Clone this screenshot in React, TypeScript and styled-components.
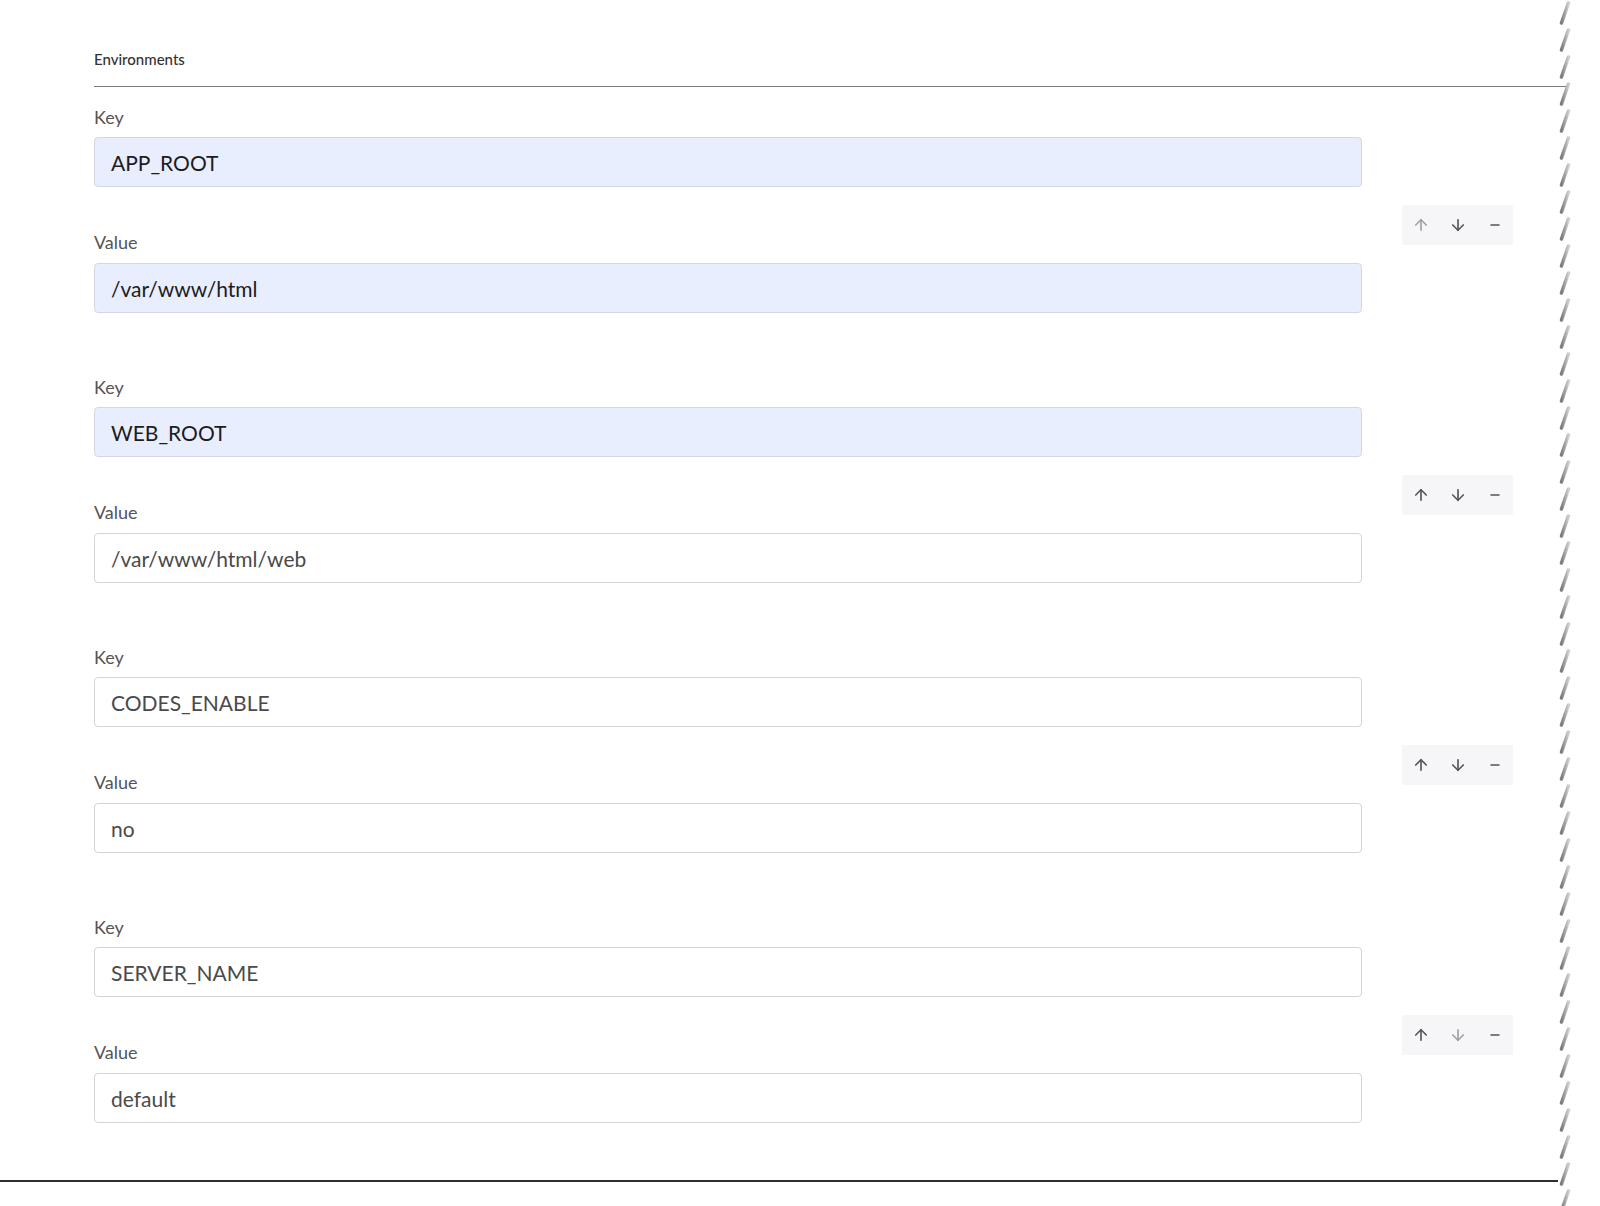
import React from 'react';
import styled, { createGlobalStyle } from 'styled-components';
import { ArrowUp, ArrowDown, Minus } from 'lucide-react';

const GlobalStyle = createGlobalStyle`
  html, body {
    margin: 0;
    padding: 0;
    background: #ffffff;
    font-family: Lato, "Open Sans", "Liberation Sans", sans-serif;
  }
`;

const Page = styled.div`
  display: flex;
  width: 1600px;
  height: 1206px;
  overflow: hidden;
  background: #ffffff;
`;

const Sheet = styled.div`
  flex: none;
  width: 1558px;
  height: 1182px;
  box-sizing: border-box;
  padding-left: 94px;
  border-bottom: 2px solid #2f2f2f;
`;

const Title = styled.div`
  padding-top: 50px;
  height: 36px;
  font-size: 15px;
  font-weight: 500;
  color: #333333;
  line-height: 18px;
`;

const Divider = styled.div`
  height: 0;
  border-top: 1.5px solid #7a7a7a;
  margin-right: -8px;
  margin-bottom: 19px;
`;

const Groups = styled.div`
  display: flex;
  flex-direction: column;
  gap: 63px;
`;

const Group = styled.div`
  display: grid;
  grid-template-columns: 1268px 111px;
  column-gap: 40px;
`;

const Fields = styled.div`
  display: flex;
  flex-direction: column;
`;

const Label = styled.label<{ $first?: boolean }>`
  display: block;
  font-size: 18px;
  line-height: 22px;
  color: #555555;
  margin-top: ${(p) => (p.$first ? '0' : '44px')};
  margin-bottom: ${(p) => (p.$first ? '9px' : '10px')};
`;

const Input = styled.div<{ $filled?: boolean }>`
  height: 50px;
  box-sizing: border-box;
  display: flex;
  align-items: center;
  padding: 0 16px;
  border: 1px solid ${(p) => (p.$filled ? '#d3d7e3' : '#d4d4d8')};
  border-radius: 4px;
  background: ${(p) => (p.$filled ? '#e8eefd' : '#ffffff')};
  color: ${(p) => (p.$filled ? '#1c1c1c' : '#4a4a4a')};
  font-size: 21px;
`;

const Actions = styled.div`
  align-self: center;
  margin-top: 31px;
  display: flex;
  height: 40px;
  background: #f6f6f9;
  border-radius: 2px;
`;

const ActionButton = styled.button<{ $disabled?: boolean }>`
  width: 37px;
  height: 40px;
  border: none;
  padding: 0;
  background: transparent;
  display: flex;
  align-items: center;
  justify-content: center;
  color: ${(p) => (p.$disabled ? '#a0a0a0' : '#555555')};
  cursor: pointer;
`;

const Edge = styled.div`
  flex: none;
  width: 14px;
  height: 1206px;
`;

type Env = { key: string; value: string; keyFilled: boolean; valueFilled: boolean };

const envs: Env[] = [
  { key: 'APP_ROOT', value: '/var/www/html', keyFilled: true, valueFilled: true },
  { key: 'WEB_ROOT', value: '/var/www/html/web', keyFilled: true, valueFilled: false },
  { key: 'CODES_ENABLE', value: 'no', keyFilled: false, valueFilled: false },
  { key: 'SERVER_NAME', value: 'default', keyFilled: false, valueFilled: false },
];

const TornEdge: React.FC = () => (
  <Edge>
    <svg width="14" height="1206" viewBox="0 0 14 1206">
      <defs>
        <linearGradient id="slash" x1="0" y1="0" x2="1" y2="0">
          <stop offset="0" stopColor="#7c7c7c" />
          <stop offset="1" stopColor="#cfcfcf" />
        </linearGradient>
        <pattern id="tear" width="14" height="27" patternUnits="userSpaceOnUse">
          <line x1="10.5" y1="3" x2="3.5" y2="23" stroke="url(#slash)" strokeWidth="3.6" strokeLinecap="round" />
        </pattern>
      </defs>
      <rect x="0" y="0" width="14" height="1206" fill="url(#tear)" />
    </svg>
  </Edge>
);

const App: React.FC = () => {
  return (
    <>
      <GlobalStyle />
      <Page>
        <Sheet>
          <Title>Environments</Title>
          <Divider />
          <Groups>
            {envs.map((env, i) => (
              <Group key={env.key}>
                <Fields>
                  <Label $first>Key</Label>
                  <Input $filled={env.keyFilled}>{env.key}</Input>
                  <Label>Value</Label>
                  <Input $filled={env.valueFilled}>{env.value}</Input>
                </Fields>
                <Actions>
                  <ActionButton $disabled={i === 0} aria-label="Move up">
                    <ArrowUp size={18} strokeWidth={2.2} />
                  </ActionButton>
                  <ActionButton $disabled={i === envs.length - 1} aria-label="Move down">
                    <ArrowDown size={18} strokeWidth={2.2} />
                  </ActionButton>
                  <ActionButton aria-label="Remove">
                    <Minus size={14} strokeWidth={2.2} />
                  </ActionButton>
                </Actions>
              </Group>
            ))}
          </Groups>
        </Sheet>
        <TornEdge />
      </Page>
    </>
  );
};

export default App;
